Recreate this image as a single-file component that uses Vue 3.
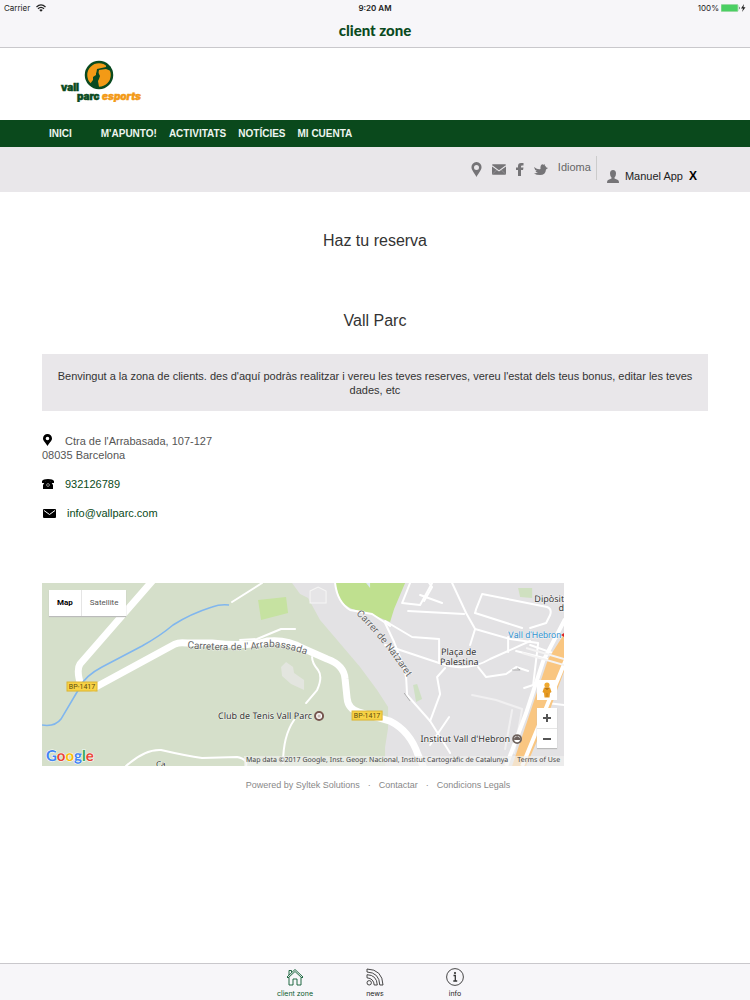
<script setup>
const menu = ["INICI", "M'APUNTO!", "ACTIVITATS", "NOTÍCIES", "MI CUENTA"]
const legal = ["Powered by Syltek Solutions", "Contactar", "Condicions Legals"]
const streets = [
  "M368 0 L360 20 L378 22 L390 0", "M378 12 L400 20", "M387 0 L390 4 L382 18",
  "M366 28 L422 31", "M410 0 L424 30 L433 46 L428 62",
  "M433 46 L468 56 L496 60 L491 102 L482 105", "M433 30 L434 26 L440 11 L470 17 L505 24 Q510 26 508 32 L504 40 L488 45",
  "M433 30 L480 45", "M343 38 L370 54 L397 56 L397 80", "M343 62 L397 80",
  "M397 80 Q425 90 448 76 L488 58", "M436 84 L444 94 L464 91 L474 84 L486 88",
  "M403 85 L395 94 L398 111 L388 138", "M343 40 L352 59 L361 82 L364 94 L365 112 L388 138 L408 170",
  "M407 134 L388 162", "M466 54 L466 69", "M474 68 L522 80", "M505 120 L522 122", "M488 62 L522 74"
]
</script>

<template>
  <div class="app">
    <header class="topbar">
      <div class="status">
        <span class="carrier">Carrier
          <svg width="10" height="8" viewBox="0 0 20 16"><g fill="none" stroke="#222" stroke-width="2.5"><path d="M1 6Q10-3 19 6M4 9.500Q10 3.500 16 9.500" /></g><path d="M6.500 12Q10 8.500 13.500 12L10 15.500Z" fill="#222" /></svg>
        </span>
        <b>9:20 AM</b>
        <span class="power">100%
          <svg width="25" height="8" viewBox="0 0 25 8"><rect x="0" y="0.500" width="17" height="7" rx="1" fill="#4bcf63" stroke="#9bd9a4" /><path d="M18 2.500Q19.500 4 18 5.500Z" fill="#333" /><path d="M23 0L20 4.500H22L21 8L24.500 3.300H22.400Z" fill="#222" /></svg>
        </span>
      </div>
      <h1>client zone</h1>
    </header>

    <div class="brand">
      <a href="#" aria-label="vall parc esports">
        <svg width="90" height="48" viewBox="0 0 90 48">
          <circle cx="42" cy="21" r="13" fill="#f39a16" stroke="#0a4a20" stroke-width="2.500" />
          <path d="M33 30L36 26L36 23L39 21V19L41 18L42 20L43 22L42 25L41 27L42 33Q37 34 33 30Z" fill="#0a4a20" />
          <path d="M39 21L40 15L49 13V10L54 13L54 17L49 15L42 16L41 21Z" fill="#0a4a20" />
          <text x="4" y="37" class="logo-word" fill="#0a4a20">vall</text>
          <text x="20" y="46" class="logo-word" fill="#0a4a20">parc</text>
          <text x="45" y="46" class="logo-word slant" fill="#f39a16">esports</text>
        </svg>
      </a>
    </div>

    <nav class="menu">
      <a v-for="m in menu" :key="m" href="#">{{ m }}</a>
    </nav>

    <div class="tools">
      <a href="#" aria-label="Location"><svg width="11" height="15" viewBox="0 0 11 15"><path fill-rule="evenodd" d="M5.500 0A5 5 0 0 1 10.500 5.500C10.500 8 7.500 11 5.500 15C3.500 11 .5 8 .5 5.500A5 5 0 0 1 5.500 0ZM5.500 3A2.500 2.500 0 1 0 5.500 8A2.500 2.500 0 1 0 5.500 3Z" /></svg></a>
      <a href="#" aria-label="Mail"><svg width="14" height="11" viewBox="0 0 15 11"><rect width="15" height="11" rx="1" /><path d="M0 1.500L7.500 7L15 1.500" fill="none" stroke="#e9e7ea" stroke-width="1.200" /><path d="M1 10L5 6M14 10L10 6" fill="none" stroke="#aaa8ab" stroke-width="0.600" /></svg></a>
      <a href="#" aria-label="Facebook"><svg width="8" height="13" viewBox="0 0 8 13"><path d="M2 13V7H0V4.500H2V3Q2 0 5 0H7.500V2.500H6Q5 2.500 5 3.500V4.500H7.500L7 7H5V13Z" /></svg></a>
      <a href="#" aria-label="Twitter"><svg width="14" height="12" viewBox="0 0 14 12"><path d="M0 3Q4 6 6.500 5Q6 1 8.500 0L9 1L10.500 0L10.800 1.500Q12 2 12 3.200L14 4L12 5.500Q11.500 11 6 11Q2.500 11 0 9.500L4 8.800Q2 8.500 1.500 7H3Q.5 6 0 3Z" /></svg></a>
      <button class="lang">Idioma</button>
      <div class="user">
        <svg width="12" height="13" viewBox="0 0 12 13"><path d="M6 0Q9 0 9 3.500Q9 6 7.500 7.500V8.500L11 10Q12 10.500 12 13H0Q0 10.500 1 10L4.500 8.500V7.500Q3 6 3 3.500Q3 0 6 0Z" /></svg>
        <span>Manuel App</span>
        <button class="exit">X</button>
      </div>
    </div>

    <main>
      <h2>Haz tu reserva</h2>
      <h2 class="club">Vall Parc</h2>
      <p class="welcome">Benvingut a la zona de clients. des d'aquí podràs realitzar i vereu les teves reserves, vereu l'estat dels teus bonus, editar les teves dades, etc</p>

      <address>
        <p>
          <span class="ico"><svg width="11" height="12" viewBox="0 0 11 12"><path fill-rule="evenodd" d="M5.500 0A4.500 4.500 0 0 1 10 4.500C10 7 7 9 5.500 12C4 9 1 7 1 4.500A4.500 4.500 0 0 1 5.500 0ZM5.500 2.700A1.800 1.800 0 1 0 5.500 6.300A1.800 1.800 0 1 0 5.500 2.700Z" /></svg></span>Ctra de l'Arrabasada, 107-127<br>08035 Barcelona
        </p>
        <p>
          <span class="ico"><svg width="12" height="10" viewBox="0 0 12 10"><path d="M0 4V2Q1 0 6 0Q11 0 12 2V4H9V2.500H3V4Z" /><path d="M3.500 2H8.500L11 6V10H1V6Z" /><circle cx="6" cy="6" r="1.400" fill="none" stroke="#aaa" stroke-width="0.800" /></svg></span><a href="#">932126789</a>
        </p>
        <p>
          <span class="ico mail"><svg width="13" height="9" viewBox="0 0 13 9"><rect width="13" height="9" rx="1" /><path d="M1 1.500L6.500 5.500L12 1.500" fill="none" stroke="#fff" /></svg></span><a href="#">info@vallparc.com</a>
        </p>
      </address>

      <section class="map" aria-label="Map">
        <svg class="canvas" viewBox="0 0 522 183">
          <rect width="522" height="183" fill="#d5dfca" />
          <path d="M250 0L258 11L266 15L278 37L301 64L318 84L335 107L346 124V145L343 164V183H522V0Z" fill="#e3e2e4" />
          <path d="M293 0L297 14Q301 22 310 26L326 30L348 39L352 26L363 0Z" fill="#bfe08f" />
          <path d="M216 17L244 14L246 30L219 37Z" fill="#c6e2a1" />
          <path d="M476 5H490V15L478 14Z" fill="#cfe0c0" /><path d="M371 102L375 101L380 116L374 119Z" fill="#cfe0c4" />
          <path d="M239 84L244 79L251 84L252 90L262 97V107L249 101L240 93Z" fill="#e3e5df" />
          <path d="M268 8L276 4L284 8V20H268Z" fill="#e6e5e7" stroke="#f6f6f5" />
          <path d="M324 0L328 5V0Z" fill="#dbe9f0" />
          <g fill="none" stroke="#fff" stroke-linejoin="round" stroke-linecap="round">
            <g stroke-width="2"><path v-for="s in streets" :key="s" :d="s" /></g>
            <path d="M430 112L454 117L480 126L472 170M470 127L463 166" stroke="#f1f0f1" stroke-width="2" />
            <path d="M190 19L220 0M293 0Q295 19 308 27L330 31L348 43M198 57L215 56L239 46H253M270 74Q270 80 276 87Q281 94 275 107L264 120M252 137Q241 153 241 180M84 183Q103 166 119 167Q145 173 160 175L195 174Q206 176 204 183" stroke-width="2" />
            <path d="M112-4L38 81Q34 87 39 103L52 105L133 61Q137 59 145 60H170Q205 64 225 58Q245 56 260 65L285 76Q302 82 303 96L305 115Q306 126 317 129L348 138Q368 148 376 172L381 183" stroke-width="7" />
          </g>
          <path d="M522 51L506 76L470 183H484L504 137L522 88Z" fill="#f9c681" />
          <path d="M523 36L501 78L484 130L464 183M524 76L480 183" fill="none" stroke="#fff" stroke-width="4" />
          <path d="M484 65L522 76M480 70L522 82" fill="none" stroke="#f4f3f3" stroke-width="2" />
          <path d="M0 142Q13 144 19 136L38 104Q43 93 60 84L100 63Q118 53 131 42Q148 31 170 24Q178 21 187 22" fill="none" stroke="#80b6ee" stroke-width="1.600" />
          <g fill="none" stroke="#999" stroke-width="0.700"><path d="M470 87L478 87L475 85M362 110L368 118" /></g>
          <g class="labels">
            <path id="road-a" d="M145 65Q185 69 215 66Q236 59 280 78" fill="none" stroke="none" />
            <path id="road-b" d="M314 31Q343 59 370 102" fill="none" stroke="none" />
            <text class="road"><textPath href="#road-a">Carretera de l' Arrabassada</textPath></text>
            <text class="road"><textPath href="#road-b">Carrer de Natzaret</textPath></text>
            <text x="270" y="136" text-anchor="end">Club de Tenis Vall Parc</text>
            <text x="399" y="72">Plaça de</text><text x="398" y="82">Palestina</text>
            <text x="468" y="159" text-anchor="end">Institut Vall d'Hebron</text>
            <text x="522" y="19" text-anchor="end">Dipòsit</text><text x="522" y="28" text-anchor="end">d</text>
            <text x="466" y="55" class="metro">Vall d'Hebron</text>
            <text x="114" y="184" class="small">Ca</text>
          </g>
          <path d="M519 52L522 50V54Z" fill="#d22" />
          <circle cx="277" cy="133" r="4" fill="#fff" stroke="#76564f" stroke-width="2" /><rect x="275.500" y="131.500" width="3" height="3" fill="#c9b9b4" />
          <circle cx="475" cy="156" r="4" fill="#fff" stroke="#6e625d" stroke-width="1.800" /><path d="M472 155L475 153L478 155V157H472Z" fill="#6e625d" />
          <g class="shields"><rect x="25" y="99" width="30" height="9" fill="#f8d245" stroke="#dbb534" /><text x="40" y="106">BP-1417</text><rect x="310" y="128" width="30" height="9" fill="#f8d245" stroke="#dbb534" /><text x="325" y="135">BP-1417</text></g>
          <rect x="202" y="173" width="320" height="10" fill="#f1f1ef" opacity="0.650" />
          <text class="google" x="4" y="178"><tspan fill="#4285f4">G</tspan><tspan fill="#ea4335">o</tspan><tspan fill="#fbbc05">o</tspan><tspan fill="#4285f4">g</tspan><tspan fill="#34a853">l</tspan><tspan fill="#ea4335">e</tspan></text>
        </svg>
        <div class="types"><button class="on">Map</button><button>Satellite</button></div>
        <div class="controls">
          <button class="man" aria-label="Street view"><svg width="10" height="16" viewBox="0 0 10 16"><circle cx="5" cy="3" r="2.600" fill="#f0a92e" /><path d="M2 5.500H8L9.500 10L8 11L7.500 15.500H2.500L2 11L.5 10Z" fill="#e79b23" /><path d="M3 6H7L5 8ZM5 11V15" fill="#b87714" stroke="#b87714" stroke-width="0.600" /></svg></button>
          <div class="zoom"><button aria-label="Zoom in"><svg width="8" height="8" viewBox="0 0 8 8"><path d="M4 0V8M0 4H8" stroke="#555" stroke-width="2" /></svg></button><button aria-label="Zoom out"><svg width="8" height="8" viewBox="0 0 8 8"><path d="M0 4H8" stroke="#555" stroke-width="2" /></svg></button></div>
        </div>
        <div class="credit"><span>Map data ©2017 Google, Inst. Geogr. Nacional, Institut Cartogràfic de Catalunya</span><a href="#">Terms of Use</a></div>
      </section>

      <footer>
        <template v-for="(l, i) in legal" :key="l"><span v-if="i">·</span><a href="#">{{ l }}</a></template>
      </footer>
    </main>

    <nav class="tabs">
      <a href="#" class="active">
        <svg width="18" height="18" viewBox="0 0 18 18"><path d="M1 9L9 1.500L17 9L16 10L9 3.500L2 10ZM3 9.500V17H7V11H11V17H15V9.500M3 7V2.500H5.500V4.500" /></svg>client zone
      </a>
      <a href="#">
        <svg width="18" height="18" viewBox="0 0 18 18"><circle cx="3.200" cy="14.800" r="2.200" /><path d="M1 1Q16.500 1.500 17 17H13.800Q13.300 4.500 1 4ZM1 6.700Q10.800 7 11.300 17H8.200Q7.800 10.500 1 9.800Z" /></svg>news
      </a>
      <a href="#">
        <svg width="18" height="18" viewBox="0 0 18 18"><circle cx="9" cy="9" r="8.400" /><path d="M7.500 7.500H9.300V13M7.300 13H11.200" stroke-width="1.300" /><circle cx="9" cy="5" r="0.700" fill="#333" /></svg>info
      </a>
    </nav>
  </div>
</template>

<style>
body { margin: 0; background: #fff; }
</style>
<style scoped>
.app { min-height: 100vh; display: flex; flex-direction: column; font: 11px/14px "Liberation Sans", Arial, sans-serif; color: #555; }
a { color: inherit; text-decoration: none; }
button { border: 0; background: none; padding: 0; font: inherit; color: inherit; cursor: pointer; }
svg { display: block; }
h1, h2, p { margin: 0; }
.topbar { height: 47px; background: #f7f6f9; border-bottom: 1px solid #c9c8cc; }
.status { display: grid; grid-template-columns: 1fr auto 1fr; padding: 0 4px; font: 8px/16px Inter, sans-serif; color: #222; }
.status b { font-weight: 600; }
.carrier, .power { display: flex; align-items: center; gap: 6px; }
.power { justify-content: flex-end; gap: 2px; }
h1 { font: 900 15px/20px Lato, sans-serif; color: #0a4a20; text-align: center; margin-top: 4px; }
.brand { height: 72px; padding-left: 57px; }
.brand a { display: inline-block; padding-top: 6px; }
.logo-word { font: 900 10px Inter, sans-serif; stroke: #0a4a20; stroke-width: 0.5px; }
.slant { font-style: italic; stroke: #f39a16; }
.menu { display: flex; gap: 12px; height: 27px; align-items: center; padding-left: 49px; background: #0a491c; color: #eef5ef; font-weight: bold; font-size: 10px; }
.menu a:first-child { margin-right: 17px; }
.tools { display: flex; justify-content: flex-end; align-items: center; height: 45px; padding-right: 53px; background: #e9e7ea; color: #666; fill: #757477; }
.tools > a { margin-right: 10px; }
.lang { align-self: flex-start; margin-top: 13px; }
.user { display: flex; align-items: center; gap: 6px; align-self: stretch; height: 24px; margin: 9px 0 0 5px; padding-left: 10px; border-left: 1px solid #ccc; color: #222; }
.user > * { margin-top: 16px; }
.exit { font-weight: bold; font-size: 12px; color: #000; }
main { padding: 0 42px; }
h2 { font-size: 16px; line-height: 20px; font-weight: normal; color: #333; text-align: center; padding-top: 39px; }
.club { padding-top: 60px; }
.welcome { margin-top: 23px; padding: 15px 14px 14px; background: #e9e7ea; color: #333; text-align: center; }
address { font-style: normal; margin-top: 23px; }
address p { margin-bottom: 15px; }
address a { color: #0a4a20; }
.ico { display: inline-block; width: 23px; }
.ico svg { display: inline-block; vertical-align: -1px; }
.mail { width: 24px; padding-left: 1px; }
.map { position: relative; width: 78.4%; margin-top: 63px; overflow: hidden; font-family: Roboto, sans-serif; text-rendering: geometricPrecision; }
.canvas { width: 100%; height: auto; }
.labels text { font: 9px "Noto Sans", sans-serif; fill: #333; stroke: #fff; stroke-opacity: 0.7; stroke-width: 1px; paint-order: stroke; }
.labels text.road { font: 10px Roboto, sans-serif; fill: #666; }
.labels text.small { font-size: 8px; }
.labels text.metro { font: 9px Roboto, sans-serif; fill: #3593cf; }
.shields text { font-size: 7px; fill: #5d4b0c; text-anchor: middle; }
.google { font: bold 15px Lato, sans-serif; stroke: #fff; stroke-width: 1px; paint-order: stroke; }
.types { position: absolute; left: 7px; top: 7px; display: flex; background: #fff; box-shadow: 0 1px 1px #bbb; font-size: 8px; color: #555; }
.types button { padding: 0 8px; height: 26px; }
.types .on { font-weight: bold; color: #000; border-right: 1px solid #e5e5e5; }
.controls { position: absolute; right: 7px; top: 97px; display: grid; gap: 8px; }
.controls button { display: grid; place-items: center; width: 20px; height: 20px; background: #fff; }
.zoom { box-shadow: 0 1px 1px #bbb; }
.zoom button + button { border-top: 1px solid #e5e5e5; }
.credit { position: absolute; right: 4px; bottom: 0; display: flex; gap: 9px; font: 7px/10px "Noto Sans", sans-serif; color: #444; white-space: nowrap; }
footer { display: flex; justify-content: center; gap: 8px; padding: 12px 0 0 6px; font-size: 9px; color: #888; }
.tabs { margin-top: auto; height: 36px; display: flex; justify-content: center; background: #f7f6f9; border-top: 1px solid #c9c8cc; font: 7px/8px Inter, sans-serif; color: #222; }
.tabs a { width: 80px; display: flex; flex-direction: column; align-items: center; gap: 4px; padding-top: 4px; }
.tabs svg { fill: none; stroke: #333; stroke-width: 0.9px; }
.tabs .active { color: #0a5a30; }
.tabs .active svg { stroke: #0a5a30; }
</style>
